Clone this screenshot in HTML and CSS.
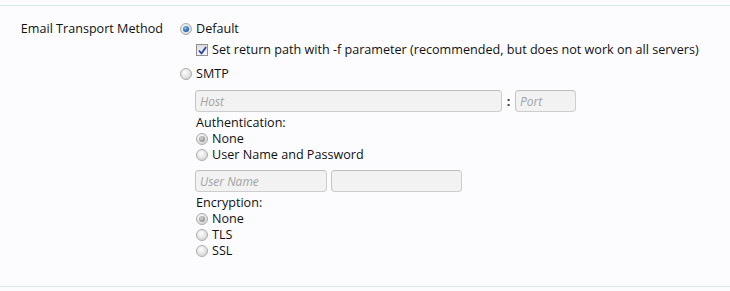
FILE: index.html
```html
<!DOCTYPE html>
<html>
<head>
<meta charset="utf-8">
<link rel="stylesheet" href="styles.css">
</head>
<body>
<div class="panel">
  <div class="row">
    <div class="label">Email Transport Method</div>
    <div class="controls">
      <div class="opt opt-default"><span class="radio checked blue"></span><span>Default</span></div>
      <div class="sub">
        <div class="opt opt-check"><span class="check"><svg width="9" height="9" viewBox="0 0 9 9"><path d="M1 4.5 L3.5 7.5 L8 1" fill="none" stroke="#2b3fae" stroke-width="1.8" stroke-linejoin="round"/></svg></span><span>Set return path with -f parameter (recommended, but does not work on all servers)</span></div>
      </div>
      <div class="opt opt-smtp"><span class="radio"></span><span>SMTP</span></div>
      <div class="sub">
        <div class="hostline">
          <input class="field host" placeholder="Host" disabled>
          <span class="colon">:</span>
          <input class="field port" placeholder="Port" disabled>
        </div>
        <div class="heading first">Authentication:</div>
        <div class="opt"><span class="radio checked gray"></span><span>None</span></div>
        <div class="opt"><span class="radio"></span><span>User Name and Password</span></div>
        <div class="userline">
          <input class="field user" placeholder="User Name" disabled>
          <input class="field pass" disabled>
        </div>
        <div class="heading">Encryption:</div>
        <div class="opt"><span class="radio checked gray"></span><span>None</span></div>
        <div class="opt"><span class="radio"></span><span>TLS</span></div>
        <div class="opt"><span class="radio"></span><span>SSL</span></div>
      </div>
    </div>
  </div>
</div>
</body>
</html>
```
FILE: styles.css
```css
html, body {
  margin: 0;
  padding: 0;
  background: #fcfcff;
}
body {
  font-family: "Open Sans", "Noto Sans", sans-serif;
  font-size: 12.6px;
  color: #111;
}
.panel {
  margin-top: 5px;
  border-top: 1px solid #d8ecee;
  border-bottom: 1px solid #d8ecee;
  height: 282px;
  box-sizing: border-box;
  padding-top: 15px;
}
.row {
  display: flex;
}
.label {
  width: 180px;
  text-align: right;
  line-height: 16px;
  padding-right: 17px;
  box-sizing: border-box;
  flex: none;
}
.controls {
  flex: 1;
}
.opt {
  display: flex;
  align-items: center;
  height: 16px;
  line-height: 16px;
  white-space: nowrap;
}
.opt-check { margin-top: 5px; }
.opt-smtp { margin-top: 8px; }
.sub {
  padding-left: 16px;
}
.radio {
  width: 10px;
  height: 10px;
  border-radius: 50%;
  border: 1px solid #acacac;
  background: radial-gradient(circle at 40% 35%, #ffffff 0%, #e2e2e2 55%, #c8c8c8 100%);
  margin-right: 4px;
  flex: none;
  position: relative;
  box-sizing: content-box;
}
.radio.checked::after {
  content: "";
  position: absolute;
  left: 2px;
  top: 2px;
  width: 6px;
  height: 6px;
  border-radius: 50%;
}
.radio.blue::after {
  background: radial-gradient(circle at 40% 35%, #8fc3f0 0%, #2a6fb8 55%, #123e78 100%);
}
.radio.gray::after {
  background: radial-gradient(circle at 40% 35%, #d6d6d6 0%, #9c9c9c 60%, #7d7d7d 100%);
}
.check {
  width: 10px;
  height: 10px;
  border: 1px solid #8e8f8f;
  background: linear-gradient(#dcdcdc, #f8f8f8);
  margin-right: 4px;
  flex: none;
  display: flex;
  align-items: center;
  justify-content: center;
}
.check svg { display: block; }
.hostline, .userline {
  display: flex;
  align-items: center;
  margin-top: 8px;
}
.hostline { margin-left: -1px; }
.userline { margin-top: 7px; gap: 4px; margin-left: -1px; }
.field {
  height: 22px;
  box-sizing: border-box;
  border: 1px solid #cdcdcd;
  border-top-color: #bdbdbd;
  border-left-color: #c4c4c4;
  border-radius: 4px;
  background: #f2f2f3;
  font-family: "Open Sans", "Noto Sans", sans-serif;
  font-size: 12px;
  padding: 0 4px;
  margin: 0;
}
.field::placeholder {
  font-style: italic;
  color: #a2a2a2;
}
.host { width: 307px; }
.port { width: 61px; }
.colon {
  width: 13px;
  text-align: center;
  font-weight: bold;
  color: #333;
}
.user { width: 132px; }
.pass { width: 131px; }
.heading {
  line-height: 16px;
  height: 16px;
  margin-top: 3px;
}
```
